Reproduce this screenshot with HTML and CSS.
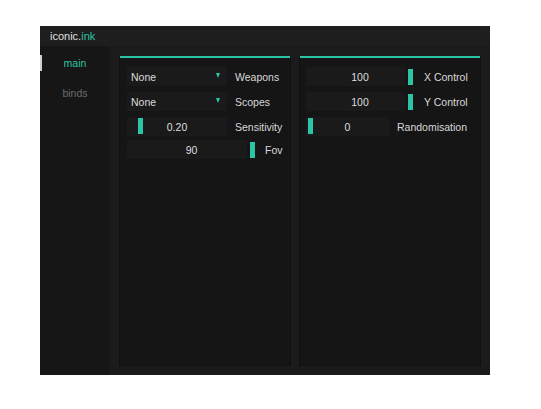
FILE: index.html
```html
<!DOCTYPE html>
<html>
<head>
<meta charset="utf-8">
<link rel="stylesheet" href="styles.css">
</head>
<body>
<div class="window">
  <div class="titlebar"><span class="brand">iconic.</span><span class="brand-accent">ink</span></div>
  <div class="main">
    <div class="sidebar">
      <div class="tab active">main</div>
      <div class="tab">binds</div>
    </div>
    <div class="content">
      <div class="panel panel-left">
        <div class="accent"></div>
        <div class="rows">
          <div class="row">
            <div class="combo w100"><span>None</span><i class="arrow"></i></div>
            <span class="label">Weapons</span>
          </div>
          <div class="row">
            <div class="combo w100"><span>None</span><i class="arrow"></i></div>
            <span class="label">Scopes</span>
          </div>
          <div class="row">
            <div class="slider w100">
              <div class="track full"></div>
              <div class="grab grab-sens"></div>
              <div class="val">0.20</div>
            </div>
            <span class="label">Sensitivity</span>
          </div>
          <div class="row row-tight">
            <div class="slider w129">
              <div class="track t120"></div>
              <div class="grab-end"></div>
              <div class="val">90</div>
            </div>
            <span class="label gap-fov">Fov</span>
          </div>
        </div>
      </div>
      <div class="panel panel-right">
        <div class="accent"></div>
        <div class="rows rows-right">
          <div class="row">
            <div class="slider w108">
              <div class="track t99"></div>
              <div class="grab-end"></div>
              <div class="val">100</div>
            </div>
            <span class="label gap-ctl">X Control</span>
          </div>
          <div class="row">
            <div class="slider w108">
              <div class="track t99"></div>
              <div class="grab-end"></div>
              <div class="val">100</div>
            </div>
            <span class="label gap-ctl">Y Control</span>
          </div>
          <div class="row">
            <div class="slider w83">
              <div class="track full"></div>
              <div class="grab grab-rand"></div>
              <div class="val">0</div>
            </div>
            <span class="label">Randomisation</span>
          </div>
        </div>
      </div>
    </div>
  </div>
</div>
</body>
</html>
```

FILE: styles.css
```css
* { box-sizing: border-box; }
html, body { margin: 0; padding: 0; background: #ffffff; }
body {
  font-family: "Liberation Sans", Arial, sans-serif;
  font-size: 10.5px;
  color: #d4d4d4;
}
.window {
  margin: 26px 0 0 40px;
  width: 450px;
  height: 349px;
  background: #161616;
  display: flex;
  flex-direction: column;
}
.titlebar {
  height: 20px;
  background: #1e1e1e;
  display: flex;
  align-items: center;
  padding-left: 10px;
  font-size: 11px;
}
.brand { color: #e0e0e0; }
.brand-accent { color: #2bc4a4; }
.main {
  flex: 1;
  display: flex;
}
.sidebar {
  width: 70px;
  background: #161616;
  padding-top: 9px;
  display: flex;
  flex-direction: column;
  gap: 14px;
}
.tab {
  height: 16px;
  display: flex;
  align-items: center;
  justify-content: center;
  color: #6a6a6a;
  font-size: 10.5px;
  border-left: 2px solid transparent;
  padding-right: 2px;
}
.tab.active {
  color: #2bc4a4;
  border-left-color: #cfcfcf;
}
.content {
  flex: 1;
  background: #1b1b1b;
  padding: 10px 9px 9px 9px;
  display: flex;
  gap: 8px;
}
.panel {
  background: #151515;
  border: 1px solid #101010;
  border-top: none;
  display: flex;
  flex-direction: column;
}
.panel-left { width: 172px; }
.panel-right { width: 182px; }
.accent {
  height: 2px;
  background: #2bc4a4;
}
.rows {
  padding: 9px 0 0 7px;
  display: flex;
  flex-direction: column;
  gap: 6px;
}
.rows-right { padding-left: 6px; }
.row {
  display: flex;
  align-items: center;
  height: 19px;
}
.row-tight { margin-top: -2px; }
.combo {
  height: 19px;
  background: #1a1a1a;
  display: flex;
  align-items: center;
  justify-content: space-between;
  padding: 0 7px 0 4px;
  color: #dcdcdc;
}
.arrow {
  width: 0;
  height: 0;
  border-left: 2.5px solid transparent;
  border-right: 2.5px solid transparent;
  border-top: 5px solid #2bc4a4;
  margin-top: -3px;
}
.w100 { width: 100px; }
.w129 { width: 129px; }
.w108 { width: 108px; }
.w83 { width: 83px; }
.label {
  margin-left: 8px;
  color: #d8d8d8;
  white-space: nowrap;
}
.gap-fov { margin-left: 9px; }
.gap-ctl { margin-left: 10px; }
.slider {
  position: relative;
  height: 19px;
  display: flex;
  align-items: center;
}
.track {
  height: 19px;
  background: #1a1a1a;
}
.track.full { width: 100%; }
.t120 { width: 120px; }
.t99 { width: 99px; }
.grab-end {
  width: 5px;
  height: 16px;
  background: #2bc4a4;
  margin-left: 3px;
}
.grab {
  position: absolute;
  top: 1px;
  width: 5px;
  height: 16px;
  background: #2bc4a4;
}
.grab-sens { left: 11px; }
.grab-rand { left: 2px; }
.val {
  position: absolute;
  inset: 0;
  display: flex;
  align-items: center;
  justify-content: center;
  color: #dedede;
}
```
